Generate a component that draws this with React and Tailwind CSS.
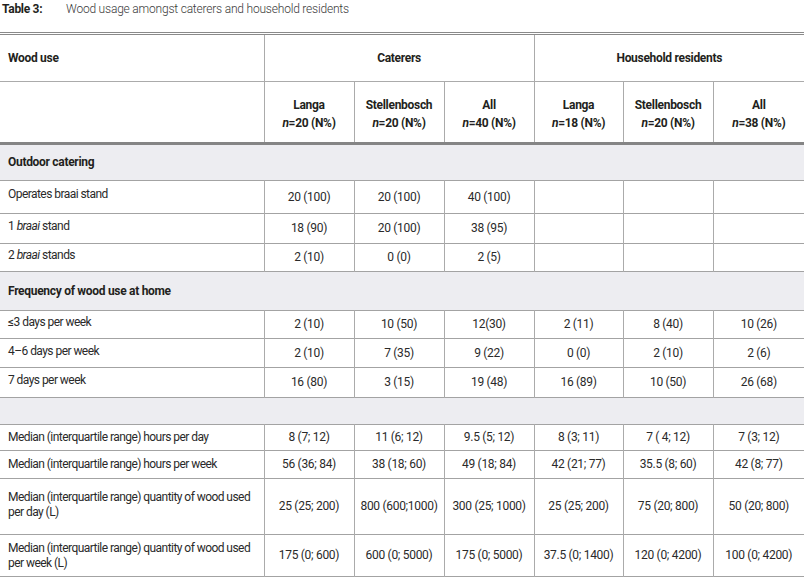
export default function App() {
  const cols = ['w-[264px]', 'w-[90px]', 'w-[90px]', 'w-[90px]', 'w-[89px]', 'w-[90px]', 'w-[91px]'];

  const sections = [
    {
      title: 'Outdoor catering',
      h: 'h-[37px]',
      rows: [
        { label: 'Operates braai stand', h: 'h-[33px]', lift: 'pb-[5px]', vals: ['20 (100)', '20 (100)', '40 (100)', '', '', ''] },
        { label: <>1 <i>braai</i> stand</>, h: 'h-[30px]', lift: 'pb-[4px]', vals: ['18 (90)', '20 (100)', '38 (95)', '', '', ''] },
        { label: <>2 <i>braai</i> stands</>, h: 'h-[28px]', lift: 'pb-[4px]', vals: ['2 (10)', '0 (0)', '2 (5)', '', '', ''] },
      ],
    },
    {
      title: 'Frequency of wood use at home',
      h: 'h-[39px]',
      rows: [
        { label: '≤3 days per week', h: 'h-[28px]', lift: 'pb-[4px]', vals: ['2 (10)', '10 (50)', '12(30)', '2 (11)', '8 (40)', '10 (26)'] },
        { label: '4–6 days per week', h: 'h-[29px]', lift: 'pb-[4px]', vals: ['2 (10)', '7 (35)', '9 (22)', '0 (0)', '2 (10)', '2 (6)'] },
        { label: '7 days per week', h: 'h-[30px]', lift: 'pb-[4px]', vals: ['16 (80)', '3 (15)', '19 (48)', '16 (89)', '10 (50)', '26 (68)'] },
      ],
    },
    {
      title: '',
      h: 'h-[27px]',
      rows: [
        { label: 'Median (interquartile range) hours per day', h: 'h-[26px]', lift: 'pb-0', vals: ['8 (7; 12)', '11 (6; 12)', '9.5 (5; 12)', '8 (3; 11)', '7 ( 4; 12)', '7 (3; 12)'] },
        { label: 'Median (interquartile range) hours per week', h: 'h-[28px]', lift: 'pb-0', vals: ['56 (36; 84)', '38 (18; 60)', '49 (18; 84)', '42 (21; 77)', '35.5 (8; 60)', '42 (8; 77)'] },
        { label: <>Median (interquartile range) quantity of wood used<br />per day (L)</>, h: 'h-[56px]', lift: 'pb-[3px]', vals: ['25 (25; 200)', '800 (600;1000)', '300 (25; 1000)', '25 (25; 200)', '75 (20; 800)', '50 (20; 800)'] },
        { label: <>Median (interquartile range) quantity of wood used<br />per week (L)</>, h: 'h-[42px]', lift: 'pb-0', vals: ['175 (0; 600)', '600 (0; 5000)', '175 (0; 5000)', '37.5 (0; 1400)', '120 (0; 4200)', '100 (0; 4200)'] },
      ],
    },
  ];

  const subHeads = [
    ['Langa', '20'],
    ['Stellenbosch', '20'],
    ['All', '40'],
    ['Langa', '18'],
    ['Stellenbosch', '20'],
    ['All', '38'],
  ];

  return (
    <div className="w-[804px] h-[582px] overflow-hidden bg-white text-[#231f20] font-['Roboto','Liberation_Sans',sans-serif] tracking-[-0.3px]">
      {/* Caption */}
      <div className="flex items-center h-[17px] pl-[2px] text-[12px] leading-none">
        <span className="w-[64px] font-bold">Table 3:</span>
        <span className="text-[#3a3a3a] font-light tracking-[-0.2px]">Wood usage amongst caterers and household residents</span>
      </div>

      <table className="mt-[15px] w-[804px] table-fixed border-collapse text-[12px] leading-[15px]">
        <colgroup>
          {cols.map((c, i) => (
            <col key={i} className={c} />
          ))}
        </colgroup>
        <thead>
          <tr className="h-[48px] border-t-[3px] border-double border-[#8a8a8a]">
            <th className="text-left font-bold px-[8px] border-r border-[#ababab] align-middle">Wood use</th>
            <th colSpan={3} className="font-bold text-center border-r border-[#ababab] align-middle">Caterers</th>
            <th colSpan={3} className="font-bold text-center align-middle">Household residents</th>
          </tr>
          <tr className="h-[62px] border-t border-b-[3px] border-b-double border-[#ababab] border-b-[#858585]">
            <th className="border-r border-[#ababab]"></th>
            {subHeads.map(([name, n], i) => (
              <th key={i} className={`font-bold text-center align-middle leading-[18px] pt-[4px] ${i < 5 ? 'border-r border-[#ababab]' : ''}`}>
                <div>{name}</div>
                <div>
                  <i>n</i>=<span>{n}</span> (N%)
                </div>
              </th>
            ))}
          </tr>
        </thead>
        <tbody>
          {sections.map((s, si) => (
            <Section key={si} section={s} />
          ))}
        </tbody>
      </table>
    </div>
  );
}

function Section({ section }) {
  return (
    <>
      <tr className={`${section.h} bg-[#ededf1] border-b border-[#a3a3a3]`}>
        <td colSpan={7} className="px-[8px] font-bold align-middle">
          {section.title}
        </td>
      </tr>
      {section.rows.map((r, ri) => (
        <tr key={ri} className={`${r.h} border-b border-[#a3a3a3]`}>
          <td className={`pl-[8px] pr-0 align-middle whitespace-nowrap tracking-[-0.55px] text-[#2a2a2a] border-r border-[#ababab] ${r.lift}`}>
            {r.label}
          </td>
          {r.vals.map((v, vi) => (
            <td
              key={vi}
              className={`text-center align-middle whitespace-nowrap text-[#2a2a2a] ${vi < 5 ? 'border-r border-[#ababab]' : ''}`}
            >
              {v}
            </td>
          ))}
        </tr>
      ))}
    </>
  );
}
